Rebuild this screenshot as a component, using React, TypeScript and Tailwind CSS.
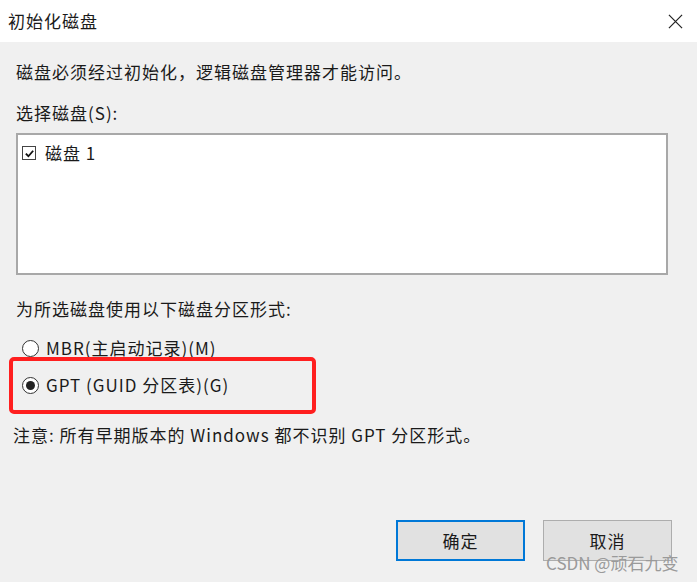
const font = { fontFamily: '"Noto Sans CJK SC", "Noto Sans", sans-serif' }

function Radio({ checked }: { checked?: boolean }) {
  return (
    <span className="flex h-[17px] w-[17px] items-center justify-center rounded-full border border-[#333] bg-white">
      {checked && <span className="h-[9px] w-[9px] rounded-full bg-[#222]" />}
    </span>
  )
}

export default function App() {
  return (
    <div
      className="flex h-[582px] w-[697px] flex-col bg-[#f0f0f0] text-[17px] leading-[24px] tracking-[1px] text-[#1a1a1a]"
      style={font}
    >
      {/* 标题栏 */}
      <div className="flex h-[42px] items-center justify-between bg-white pl-2 pr-[14px]">
        <span>初始化磁盘</span>
        <svg viewBox="0 0 16 16" className="h-[15px] w-[15px]">
          <path d="M1 1 L15 15 M15 1 L1 15" stroke="#222" strokeWidth="1.3" fill="none" />
        </svg>
      </div>

      <div className="flex flex-1 flex-col px-4">
        <p className="mt-[18px]">磁盘必须经过初始化，逻辑磁盘管理器才能访问。</p>
        <p className="mt-[17px]">选择磁盘(S):</p>

        <div className="mt-[8px] h-[142px] w-[652px] border-2 border-[#a8a8a8] bg-white px-1 py-[6px]">
          <div className="flex items-center gap-[9px]">
            <span className="flex h-[14px] w-[14px] items-center justify-center border border-[#444] bg-white">
              <svg viewBox="0 0 12 12" className="h-[11px] w-[11px]">
                <path d="M2 6.2 L4.8 9 L10 3" fill="none" stroke="#111" strokeWidth="2" />
              </svg>
            </span>
            <span>磁盘 1</span>
          </div>
        </div>

        <p className="mt-[22px]">为所选磁盘使用以下磁盘分区形式:</p>

        <div className="mt-[15px] flex items-center gap-[7px] pl-[6px]">
          <Radio />
          <span>MBR(主启动记录)(M)</span>
        </div>

        <div className="relative mt-[13px] flex items-center gap-[7px] pl-[6px]">
          <Radio checked />
          <span>GPT (GUID 分区表)(G)</span>
          <div className="absolute left-[-7px] top-[-16px] h-[57px] w-[307px] rounded-[5px] border-4 border-[#ff1f1f]" />
        </div>

        <p className="mt-[26px] -ml-[3px]">注意: 所有早期版本的 Windows 都不识别 GPT 分区形式。</p>

        <div className="mt-auto mb-[21px] flex justify-end gap-[18px] pr-[9px]">
          <button className="h-[41px] w-[129px] border-2 border-[#0078d7] bg-[#e1e1e1]">确定</button>
          <div className="relative">
            <button className="h-[41px] w-[129px] border border-[#adadad] bg-[#e1e1e1]">取消</button>
            {/* 水印 */}
            <span className="absolute left-[3px] top-[34px] whitespace-nowrap text-[17px] leading-[17px] tracking-[0px] text-[#9a9a9a]">
              CSDN @顽石九变
            </span>
          </div>
        </div>
      </div>
    </div>
  )
}
